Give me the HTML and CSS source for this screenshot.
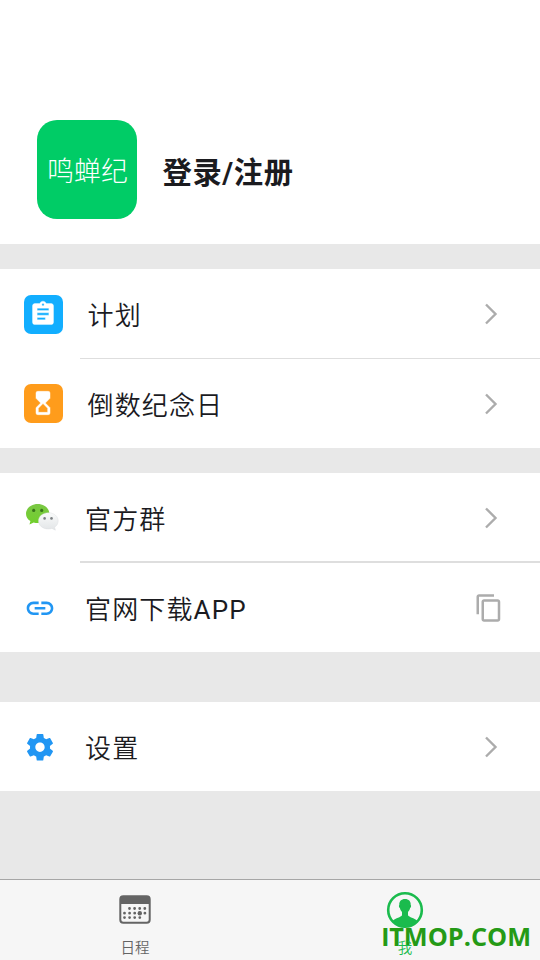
FILE: index.html
```html
<!DOCTYPE html>
<html lang="zh-CN">
<head>
<meta charset="utf-8">
<title>我</title>
<link rel="stylesheet" href="styles.css">
</head>
<body>
<main class="screen">
  <header class="profile">
    <div class="logo">鸣蝉纪</div>
    <h1 class="login">登录/注册</h1>
  </header>

  <section class="group">
    <div class="row wide">
      <span class="tile blue">
        <svg width="28" height="28" viewBox="0 0 24 24"><path fill="#fff" stroke="#fff" stroke-width=".3" d="M19 3h-4.180C14.400 1.840 13.300 1 12 1s-2.400.840-2.820 2H5c-1.100 0-2 .900-2 2v14c0 1.100.900 2 2 2h14c1.100 0 2-.900 2-2V5c0-1.100-.900-2-2-2zm-7 0c.550 0 1 .450 1 1s-.450 1-1 1-1-.450-1-1 .450-1 1-1zm2 14H7v-2h7v2zm3-4H7v-2h10v2zm0-4H7V7h10v2z"/></svg>
      </span>
      <span class="label">计划</span>
      <svg class="chevron" width="14" height="22" viewBox="0 0 14 22"><path d="M2 1.500l9.500 9.500L2 20.500"/></svg>
    </div>
    <div class="row wide">
      <span class="tile orange">
        <svg width="28" height="28" viewBox="0 0 24 24"><path fill="#fff" stroke="#fff" stroke-width=".4" stroke-linejoin="round" d="M18 20.500l-.010-4.500L14 12l3.990-4.010L18 3.500Q18 2 16.500 2h-9Q6 2 6 3.500V8l4 4-4 3.990v4.510Q6 22 7.500 22h9Q18 22 18 20.500zM8 16.500l4-4 4 4V20H8v-3.500z"/></svg>
      </span>
      <span class="label">倒数纪念日</span>
      <svg class="chevron" width="14" height="22" viewBox="0 0 14 22"><path d="M2 1.500l9.500 9.500L2 20.500"/></svg>
    </div>
  </section>

  <section class="group">
    <div class="row">
      <span class="glyph">
        <svg width="36" height="30" viewBox="0 .6 36 30">
          <defs>
            <linearGradient id="green" x1="0" y1="0" x2="0" y2="1"><stop offset="0" stop-color="#7bc845"/><stop offset="1" stop-color="#70cf2a"/></linearGradient>
            <linearGradient id="silver" x1="0" y1="0" x2="0" y2="1"><stop offset="0" stop-color="#fafbfb"/><stop offset="1" stop-color="#e2e5e7"/></linearGradient>
          </defs>
          <path fill="url(#green)" d="M13.700 1.700C7.200 1.700 2 5.900 2 11.300c0 3.100 1.700 5.700 4.400 7.400L5.500 22.200l4.200-2.200c1.300.400 2.600.600 4 .600 6.500 0 11.600-4.100 11.600-9.400S20.200 1.700 13.700 1.700z"/>
          <path fill="url(#silver)" stroke="#d9dcdd" stroke-width=".4" d="M24.300 10.300c-5.500 0-9.800 3.600-9.800 8.200s4.300 8.100 9.800 8.100c1.300 0 2.500-.200 3.600-.600l3.500 1.800-.800-3c2.200-1.500 3.600-3.700 3.600-6.300 0-4.600-4.400-8.200-9.900-8.200z"/>
          <g fill="#38751a"><circle cx="9.700" cy="8" r="1.600"/><circle cx="17.700" cy="8" r="1.600"/></g>
          <g fill="#7c8083"><circle cx="20.600" cy="16" r="1.300"/><circle cx="27.500" cy="16" r="1.300"/></g>
        </svg>
      </span>
      <span class="label">官方群</span>
      <svg class="chevron" width="14" height="22" viewBox="0 0 14 22"><path d="M2 1.500l9.500 9.500L2 20.500"/></svg>
    </div>
    <div class="row">
      <span class="glyph">
        <svg width="32" height="32" viewBox="0 -.2 24 24"><path fill="#2196f3" d="M3.900 12c0-1.710 1.390-3.100 3.100-3.100h4V7H7c-2.760 0-5 2.240-5 5s2.240 5 5 5h4v-1.900H7c-1.710 0-3.100-1.390-3.100-3.100zM8 13h8v-2H8v2zm9-6h-4v1.900h4c1.710 0 3.100 1.390 3.100 3.100s-1.390 3.100-3.100 3.100h-4V17h4c2.760 0 5-2.240 5-5s-2.240-5-5-5z"/></svg>
      </span>
      <span class="label">官网下载<span class="latin">APP</span></span>
      <svg class="copy" width="30" height="30" viewBox="0 0 24 24"><path fill="#acacac" d="M16 1H4c-1.100 0-2 .900-2 2v14h2V3h12V1zm3 4H8c-1.100 0-2 .900-2 2v14c0 1.100.900 2 2 2h11c1.100 0 2-.900 2-2V7c0-1.100-.900-2-2-2zm0 16H8V7h11v14z"/></svg>
    </div>
  </section>

  <section class="group settings">
    <div class="row">
      <span class="glyph">
        <svg width="32" height="32" viewBox="0 -.2 24 24"><path fill="#2196f3" d="M19.430 12.980c.040-.320.070-.640.070-.980s-.030-.660-.070-.980l2.110-1.650c.190-.150.240-.420.120-.640l-2-3.460c-.120-.220-.390-.300-.610-.220l-2.490 1c-.520-.400-1.080-.730-1.690-.980l-.380-2.650C14.460 2.180 14.250 2 14 2h-4c-.250 0-.460.180-.490.420l-.380 2.650c-.610.250-1.170.590-1.690.980l-2.490-1c-.230-.090-.490 0-.610.220l-2 3.460c-.130.220-.070.490.120.640l2.110 1.650c-.040.320-.070.650-.070.980s.030.660.070.980l-2.110 1.650c-.190.150-.240.420-.120.640l2 3.460c.120.220.390.300.610.220l2.490-1c.520.400 1.080.730 1.690.980l.380 2.650c.030.240.240.420.490.420h4c.250 0 .460-.180.490-.420l.380-2.650c.610-.250 1.170-.590 1.690-.980l2.490 1c.230.090.490 0 .610-.220l2-3.460c.120-.220.070-.490-.120-.640l-2.110-1.650zM12 15.500c-1.930 0-3.500-1.570-3.500-3.500s1.570-3.500 3.500-3.500 3.500 1.570 3.500 3.500-1.570 3.500-3.500 3.500z"/></svg>
      </span>
      <span class="label">设置</span>
      <svg class="chevron" width="14" height="22" viewBox="0 0 14 22"><path d="M2 1.500l9.500 9.500L2 20.500"/></svg>
    </div>
  </section>

  <nav class="tabs">
    <div class="tab">
      <svg width="38" height="38" viewBox="0 0 38 38">
        <rect x="4.300" y="5.300" width="29.400" height="26.400" rx="3" fill="#f6f6f6" stroke="#646464" stroke-width="2"/>
        <path fill="#646464" d="M4 13V8a3 3 0 0 1 3-3h24a3 3 0 0 1 3 3v5z"/>
        <g stroke="#646464" stroke-width="2.800" stroke-linecap="round" stroke-dasharray="0 5.100">
          <path d="M13.500 17.500h16"/><path d="M8.500 22.200h21"/><path d="M8.500 26.600h16"/>
        </g>
        <circle cx="23.800" cy="22.200" r="2.200" fill="#646464"/>
      </svg>
      <span>日程</span>
    </div>
    <div class="tab active">
      <svg width="38" height="38" viewBox="0 0 38 38">
        <circle cx="19" cy="19" r="16.800" fill="#f6f6f6" stroke="#1abb4d" stroke-width="2.600"/>
        <path fill="#1abb4d" d="M19 8c-3.700 0-5.900 2.300-5.700 5.900-.700.200-.400 2.800.600 3.200.400 1.700 1 2.900 2.100 3.900v3.200c-1.100 2.200-6.300 2.500-9.200 5.500A17 17 0 0 0 19 36a17 17 0 0 0 12.200-6.300c-2.900-3-8.100-3.300-9.200-5.500V21c1.100-1 1.700-2.200 2.100-3.900 1-.400 1.300-3 .600-3.200C24.900 10.300 22.700 8 19 8z"/>
      </svg>
      <span>我</span>
    </div>
  </nav>
  <div class="watermark"><span class="stem">I</span>TMOP.COM</div>
</main>
</body>
</html>
```
FILE: styles.css
```css
* { box-sizing: border-box; }

body {
  margin: 0;
  font-family: Roboto, "Noto Sans CJK SC", sans-serif;
  color: #1b1b1f;
}

svg { display: block; flex: none; }

.screen {
  position: relative;
  display: flex;
  flex-direction: column;
  width: 540px;
  height: 960px;
  overflow: hidden;
  background: #e8e8e8;
}

.profile {
  display: flex;
  align-items: center;
  gap: 25.500px;
  height: 244.400px;
  padding: 95px 37px 0;
  background: #fff;
}

.logo {
  display: flex;
  align-items: center;
  justify-content: center;
  width: 100px;
  height: 99px;
  padding: 0 0 1px 1px;
  border-radius: 20px;
  background: #00cc66;
  color: #fff;
  font-size: 26.800px;
  font-weight: 300;
  white-space: nowrap;
}

.login {
  margin: 0;
  font-size: 29.300px;
  font-weight: 700;
  letter-spacing: .6px;
}

.group {
  margin-top: 24.500px;
  background: #fff;
}

.group.settings { margin-top: 49.500px; }

.row {
  position: relative;
  display: flex;
  align-items: center;
  height: 89.700px;
  padding: 1px 42px 0 24px;
}

.row + .row::before {
  content: "";
  position: absolute;
  top: -1px;
  left: 80px;
  right: 0;
  height: 1.500px;
  background: #dedede;
}

.tile {
  display: flex;
  align-items: center;
  justify-content: center;
  width: 39px;
  height: 39px;
  margin-right: 24.500px;
  padding: 0 1px 1px 0;
  border-radius: 7px;
}

.blue { background: #12aeff; }
.orange { background: #ff9c1b; }

.glyph {
  display: flex;
  width: 36px;
  margin-right: 25px;
}

.label {
  flex: 1;
  padding-bottom: 1px;
  font-size: 26px;
  font-weight: 350;
  letter-spacing: 1.150px;
}

.latin { font-weight: 400; }

.chevron {
  fill: none;
  stroke: #acacac;
  stroke-width: 2.400;
}

.copy { margin-right: -6px; }

.tabs {
  display: flex;
  height: 81px;
  margin-top: auto;
  border-top: 1px solid #a6a6a6;
  background: #f6f6f6;
}

.tab {
  flex: 1;
  display: flex;
  flex-direction: column;
  align-items: center;
  padding-top: 11px;
  color: #646464;
  font-size: 14.500px;
  font-weight: 350;
  line-height: 20px;
}

.tab span {
  position: relative;
  z-index: 1;
  margin-top: 10px;
}

.tab.active { color: #1abb4d; }

.watermark {
  position: absolute;
  right: 9px;
  bottom: 6px;
  color: #259a16;
  font: 700 25.300px/36px "Open Sans", sans-serif;
}

.stem {
  font-family: Lato, sans-serif;
  font-weight: 900;
}
```
